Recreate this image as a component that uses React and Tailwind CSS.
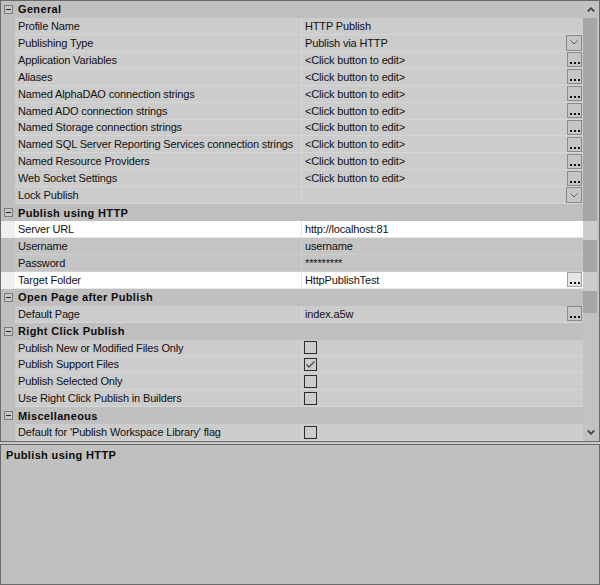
import React from "react";

const sections = [
  {
    title: "General",
    rows: [
      { name: "Profile Name", value: "HTTP Publish" },
      { name: "Publishing Type", value: "Publish via HTTP", kind: "dropdown" },
      { name: "Application Variables", value: "<Click button to edit>", kind: "ellipsis" },
      { name: "Aliases", value: "<Click button to edit>", kind: "ellipsis" },
      { name: "Named AlphaDAO connection strings", value: "<Click button to edit>", kind: "ellipsis" },
      { name: "Named ADO connection strings", value: "<Click button to edit>", kind: "ellipsis" },
      { name: "Named Storage connection strings", value: "<Click button to edit>", kind: "ellipsis" },
      { name: "Named SQL Server Reporting Services connection strings", value: "<Click button to edit>", kind: "ellipsis" },
      { name: "Named Resource Providers", value: "<Click button to edit>", kind: "ellipsis" },
      { name: "Web Socket Settings", value: "<Click button to edit>", kind: "ellipsis" },
      { name: "Lock Publish", value: "", kind: "dropdown" },
    ],
  },
  {
    title: "Publish using HTTP",
    rows: [
      { name: "Server URL", value: "http://localhost:81", hl: true },
      { name: "Username", value: "username", dim: true },
      { name: "Password", value: "*********", dim: true },
      { name: "Target Folder", value: "HttpPublishTest", kind: "ellipsis", hl: true },
    ],
  },
  {
    title: "Open Page after Publish",
    rows: [{ name: "Default Page", value: "index.a5w", kind: "ellipsis" }],
  },
  {
    title: "Right Click Publish",
    rows: [
      { name: "Publish New or Modified Files Only", kind: "check", checked: false },
      { name: "Publish Support Files", kind: "check", checked: true },
      { name: "Publish Selected Only", kind: "check", checked: false },
      { name: "Use Right Click Publish in Builders", kind: "check", checked: false },
    ],
  },
  {
    title: "Miscellaneous",
    rows: [{ name: "Default for 'Publish Workspace Library' flag", kind: "check", checked: false }],
  },
];

function CollapseBox() {
  return (
    <div className="w-[9px] h-[9px] border border-[#7c7c7c] bg-[#c6c6c6] flex items-center justify-center">
      <div className="w-[5px] h-[1px] bg-[#2a2a2a]" />
    </div>
  );
}

function CategoryRow({ title }) {
  return (
    <div className="flex h-[17px] bg-[#bfbfbf] items-center">
      <div className="w-[14px] shrink-0 flex items-center justify-center pl-[1px]">
        <CollapseBox />
      </div>
      <div className="pl-[3px] pt-[1px] font-bold tracking-[0.35px] text-[#0c0c0c]">{title}</div>
    </div>
  );
}

function DropButton({ light }) {
  return (
    <div
      className={`w-[16px] h-[16px] shrink-0 border flex items-center justify-center ${
        light ? "border-[#adadad] bg-[#e5e5e5]" : "border-[#8a8a8a] bg-[#c6c6c6]"
      }`}
    >
      <svg width="8" height="5" viewBox="0 0 8 5">
        <path d="M0.5 0.5 L4 4 L7.5 0.5" stroke="#5a5a5a" strokeWidth="1" fill="none" />
      </svg>
    </div>
  );
}

function EllipsisButton({ light }) {
  return (
    <div
      className={`w-[15px] h-[15px] shrink-0 border flex items-end justify-center gap-[2px] pb-[2px] ${
        light ? "border-[#a0a0a0] bg-[#e5e5e5]" : "border-[#8a8a8a] bg-[#c6c6c6]"
      }`}
    >
      <div className="w-[2px] h-[2px] bg-[#111]" />
      <div className="w-[2px] h-[2px] bg-[#111]" />
      <div className="w-[2px] h-[2px] bg-[#111]" />
    </div>
  );
}

function CheckBox({ checked }) {
  return (
    <div className="w-[13px] h-[13px] ml-[-1px] border border-[#2e2e2e] flex items-center justify-center">
      {checked && (
        <svg width="9" height="7" viewBox="0 0 9 7">
          <path d="M0.5 3.5 L3 6 L8.5 0.5" stroke="#4a4a4a" strokeWidth="1.3" fill="none" />
        </svg>
      )}
    </div>
  );
}

function PropRow({ name, value, kind, hl, dim, checked }) {
  const cellBg = hl ? "bg-white border-[#e6e6e6]" : dim ? "bg-[#c4c4c4] border-[#cecece]" : "bg-[#cccccc] border-[#d6d6d6]";
  const divider = hl ? "border-[#e6e6e6]" : dim ? "border-[#cecece]" : "border-[#d6d6d6]";
  const gutter = hl ? "bg-[#efefef]" : "bg-[#bfbfbf]";
  return (
    <div className="flex h-[17px]">
      <div className={`w-[14px] shrink-0 ${gutter}`} />
      <div className={`flex flex-1 border-b ${cellBg}`}>
        <div className={`w-[287px] shrink-0 border-r pl-[3px] pt-[1px] flex items-center whitespace-nowrap overflow-hidden ${divider}`}>
          {name}
        </div>
        <div className="flex-1 flex items-center pl-[3px] pr-[1px] min-w-0">
          {kind === "check" ? (
            <CheckBox checked={checked} />
          ) : (
            <span className="flex-1 pt-[1px] whitespace-nowrap overflow-hidden">{value}</span>
          )}
          {kind === "dropdown" && <DropButton light={hl} />}
          {kind === "ellipsis" && <EllipsisButton light={hl} />}
        </div>
      </div>
    </div>
  );
}

function ScrollBar() {
  return (
    <div className="w-[16px] shrink-0 bg-[#c2c2c2] flex flex-col relative">
      <div className="h-[17px] flex items-center justify-center shrink-0">
        <svg width="8" height="5" viewBox="0 0 8 5">
          <path d="M0.8 4.5 L4 1.2 L7.2 4.5" stroke="#464646" strokeWidth="1.8" fill="none" />
        </svg>
      </div>
      <div className="flex-1 flex flex-col">
        <div className="w-[14px] h-[295px] bg-[#a6a6a6]" />
      </div>
      <div className="h-[17px] flex items-center justify-center shrink-0">
        <svg width="8" height="5" viewBox="0 0 8 5">
          <path d="M0.8 0.5 L4 3.8 L7.2 0.5" stroke="#464646" strokeWidth="1.8" fill="none" />
        </svg>
      </div>
      {/* highlight bands for the marked rows */}
      <div className="absolute left-0 w-[14px] top-[220px] h-[19px] bg-[#cdcdcd]" />
      <div className="absolute left-0 w-[14px] top-[271px] h-[19px] bg-[#cdcdcd]" />
    </div>
  );
}

export default function App() {
  return (
    <div
      className="w-[600px] h-[585px] bg-[#c8c8c8] flex flex-col text-[11px] leading-[13px] text-[#111] tracking-[-0.15px]"
      style={{ fontFamily: '"Liberation Sans", Arial, sans-serif' }}
    >
      <div className="h-[442px] shrink-0 border border-[#6a6a6a] flex">
        <div className="flex-1 overflow-hidden flex flex-col">
          {sections.map((s) => (
            <React.Fragment key={s.title}>
              <CategoryRow title={s.title} />
              {s.rows.map((r) => (
                <PropRow key={r.name} {...r} />
              ))}
            </React.Fragment>
          ))}
        </div>
        <ScrollBar />
      </div>
      <div className="h-[2px] shrink-0" />
      <div className="flex-1 border border-[#6a6a6a] bg-[#c0c0c0] pl-[5px] pt-[4px]">
        <div className="font-bold tracking-[0.35px] text-[#0c0c0c]">Publish using HTTP</div>
      </div>
    </div>
  );
}
